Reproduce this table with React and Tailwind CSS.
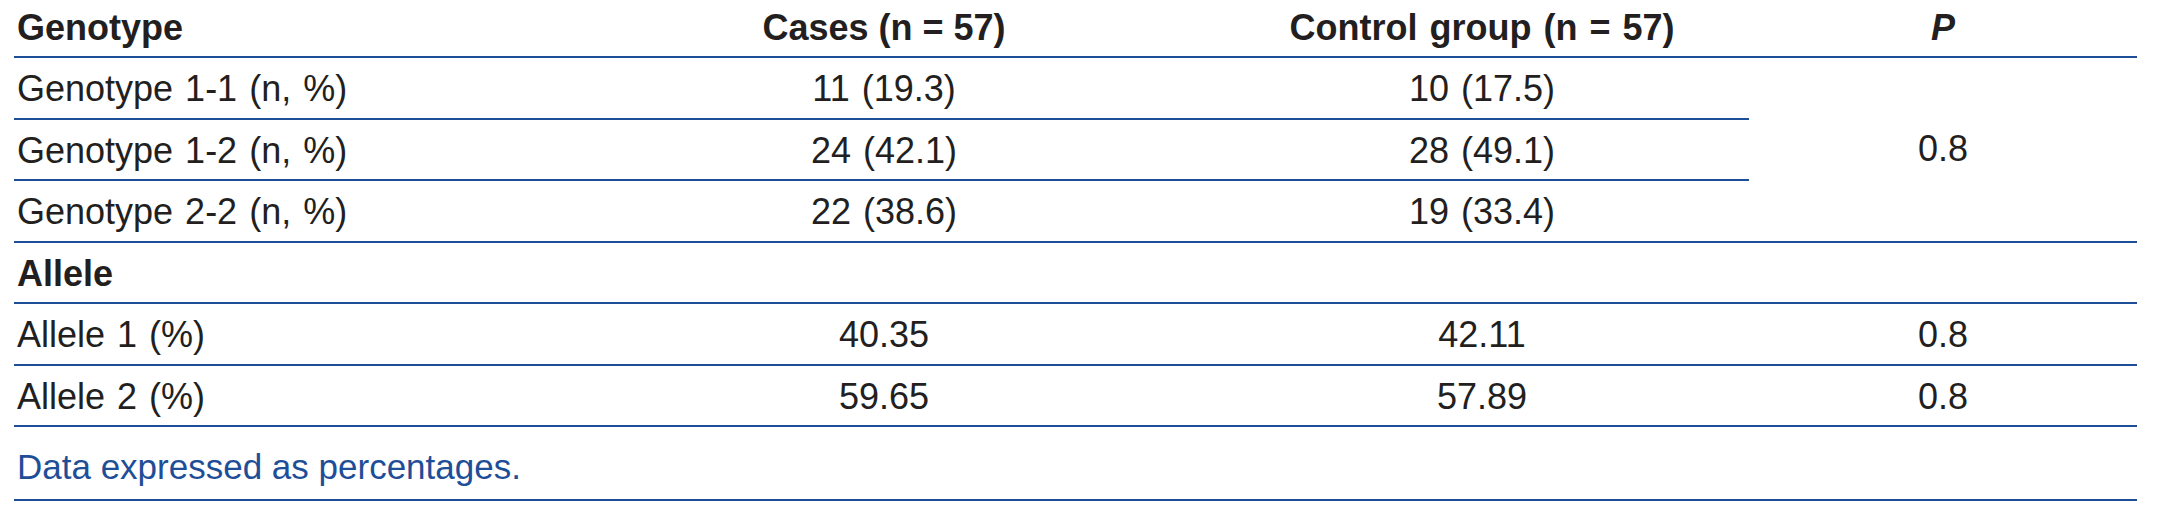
const rows = [
  { label: 'Genotype 1-1 (n, %)', cases: '11 (19.3)', control: '10 (17.5)' },
  { label: 'Genotype 1-2 (n, %)', cases: '24 (42.1)', control: '28 (49.1)' },
  { label: 'Genotype 2-2 (n, %)', cases: '22 (38.6)', control: '19 (33.4)' },
];

const alleles = [
  { label: 'Allele 1 (%)', cases: '40.35', control: '42.11', p: '0.8' },
  { label: 'Allele 2 (%)', cases: '59.65', control: '57.89', p: '0.8' },
];

const line = 'border-b-2 border-[#1f4e98]';
const cell = 'h-[61.5px] p-0 pt-[3px] align-middle';

export default function App() {
  return (
    <div className="w-[2165px] h-[531px] bg-white pl-[14px] pr-[28px] font-['Liberation_Sans',Arial,sans-serif] text-[#231f20]">
      <table className="w-[2123px] table-fixed border-collapse text-[36px] leading-none">
        <colgroup>
          <col className="w-[539px]" />
          <col className="w-[662px]" />
          <col className="w-[534px]" />
          <col className="w-[388px]" />
        </colgroup>
        <thead>
          <tr className={line}>
            <th className="h-[57px] p-0 pl-[3px] text-left align-middle font-bold">Genotype</th>
            <th className="h-[57px] p-0 text-center align-middle font-bold">Cases (n = 57)</th>
            <th className="h-[57px] p-0 text-center align-middle font-bold [word-spacing:2px]">
              Control group (n = 57)
            </th>
            <th className="h-[57px] p-0 text-center align-middle font-bold italic">P</th>
          </tr>
        </thead>
        <tbody className="[word-spacing:2px]">
          {rows.map((r, i) => (
            <tr key={r.label}>
              <td className={`${cell} ${line} pl-[3px]`}>{r.label}</td>
              <td className={`${cell} ${line} text-center`}>{r.cases}</td>
              <td className={`${cell} ${line} text-center`}>{r.control}</td>
              {i === 0 && (
                <td rowSpan={3} className={`p-0 ${line} text-center align-middle`}>
                  0.8
                </td>
              )}
            </tr>
          ))}
          <tr className={line}>
            <td colSpan={4} className={`${cell} pl-[3px] font-bold`}>Allele</td>
          </tr>
          {alleles.map((a) => (
            <tr key={a.label} className={line}>
              <td className={`${cell} pl-[3px]`}>{a.label}</td>
              <td className={`${cell} text-center`}>{a.cases}</td>
              <td className={`${cell} text-center`}>{a.control}</td>
              <td className={`${cell} text-center`}>{a.p}</td>
            </tr>
          ))}
        </tbody>
        <tfoot>
          <tr className={line}>
            <td colSpan={4} className="h-[74px] p-0 pt-[6px] pl-[3px] align-middle text-[35px] text-[#1f4e98]">
              Data expressed as percentages.
            </td>
          </tr>
        </tfoot>
      </table>
    </div>
  );
}
